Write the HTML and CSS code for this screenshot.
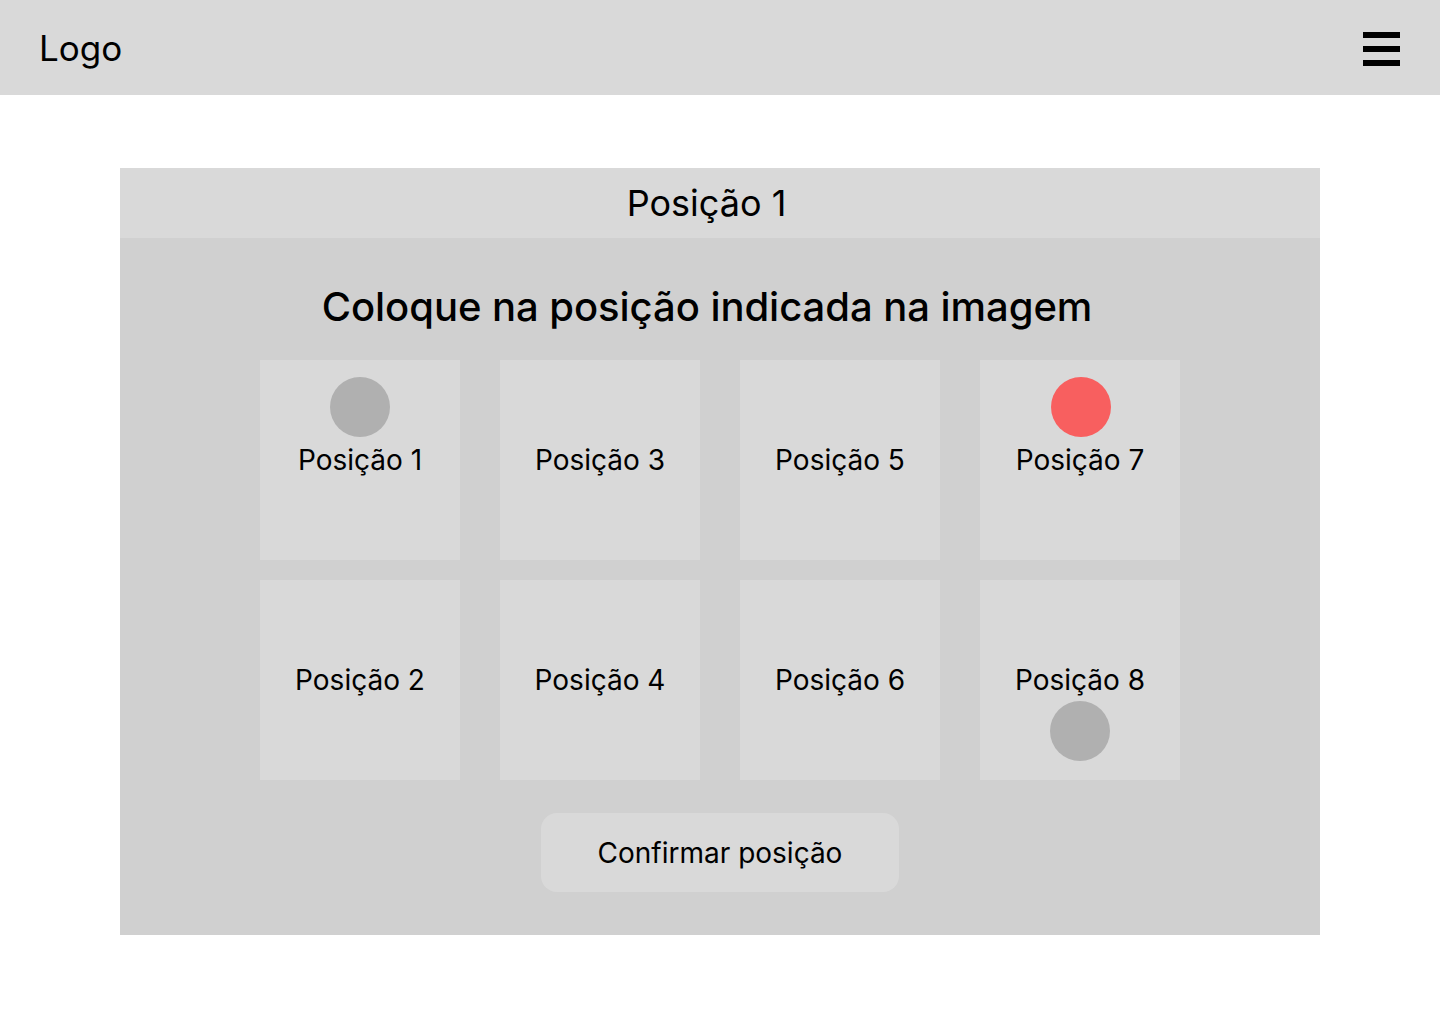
FILE: index.html
```html
<!DOCTYPE html>
<html lang="pt">
<head>
<meta charset="utf-8">
<title>Posição</title>
<link rel="stylesheet" href="styles.css">
</head>
<body>
<header class="topbar">
  <div class="logo">Logo</div>
  <button class="menu" aria-label="Menu">
    <svg width="37" height="34" viewBox="0 0 37 34"><rect x="0" y="0" width="37" height="6" fill="#000"/><rect x="0" y="14" width="37" height="6" fill="#000"/><rect x="0" y="28" width="37" height="6" fill="#000"/></svg>
  </button>
</header>
<main class="main">
  <section class="panel">
    <div class="panel-title">Posição 1</div>
    <div class="panel-body">
      <h1 class="heading">Coloque na posição indicada na imagem</h1>
      <div class="grid">
        <div class="cell"><span class="dot dot-top"></span>Posição 1</div>
        <div class="cell">Posição 3</div>
        <div class="cell">Posição 5</div>
        <div class="cell"><span class="dot dot-top dot-red"></span>Posição 7</div>
        <div class="cell">Posição 2</div>
        <div class="cell">Posição 4</div>
        <div class="cell">Posição 6</div>
        <div class="cell"><span class="dot dot-bottom"></span>Posição 8</div>
      </div>
      <button class="confirm">Confirmar posição</button>
    </div>
  </section>
</main>
</body>
</html>
```
FILE: styles.css
```css
* { box-sizing: border-box; }
html, body { margin: 0; padding: 0; }
body {
  font-family: Inter, "Noto Sans", sans-serif;
  background: #ffffff;
  color: #000;
  width: 1440px;
}
.topbar {
  height: 95px;
  background: #d9d9d9;
  display: flex;
  align-items: center;
  justify-content: space-between;
  padding: 0 40px;
}
.logo {
  font-size: 35px;
  font-weight: 400;
  line-height: 1;
  margin-top: 2px;
  margin-left: -1px;
}
.menu {
  background: none;
  border: 0;
  padding: 0;
  width: 37px;
  height: 34px;
  display: block;
  margin-top: 3px;
}
.menu svg { display: block; }
.main {
  padding-top: 73px;
  display: flex;
  justify-content: center;
}
.panel {
  width: 1200px;
}
.panel-title {
  height: 70px;
  background: #d9d9d9;
  display: flex;
  align-items: center;
  justify-content: center;
  padding-right: 27px;
  font-size: 36px;
  font-weight: 400;
}
.panel-body {
  background: #d0d0d0;
  padding: 45px 0 43px;
  display: flex;
  flex-direction: column;
  align-items: center;
}
.heading {
  margin: 0;
  padding-right: 26px;
  font-size: 40px;
  font-weight: 500;
  line-height: 48px;
  letter-spacing: -0.05px;
}
.grid {
  margin-top: 29px;
  display: grid;
  grid-template-columns: repeat(4, 200px);
  grid-auto-rows: 200px;
  column-gap: 40px;
  row-gap: 20px;
}
.cell {
  position: relative;
  background: #d9d9d9;
  display: flex;
  align-items: center;
  justify-content: center;
  font-size: 28px;
  line-height: 34px;
}
.dot {
  position: absolute;
  left: 70px;
  width: 60px;
  height: 60px;
  border-radius: 50%;
  background: #b0b0b0;
}
.dot-top { top: 17px; }
.dot-bottom { top: 121px; }
.dot-red { background: #f85f5f; left: 71px; }
.confirm {
  margin-top: 33px;
  width: 358px;
  height: 79px;
  border: 0;
  border-radius: 16px;
  background: #d9d9d9;
  font-family: Inter, "Noto Sans", sans-serif;
  font-size: 28px;
  color: #000;
  padding: 0;
}
```
